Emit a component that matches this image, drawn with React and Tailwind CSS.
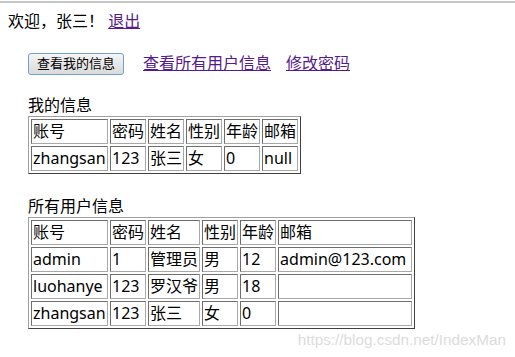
import React from "react";

const myInfo = {
  head: ["账号", "密码", "姓名", "性别", "年龄", "邮箱"],
  rows: [["zhangsan", "123", "张三", "女", "0", "null"]],
  widths: ["w-[77px]", "w-[36px]", "w-[36px]", "w-[36px]", "w-[36px]", "w-[36px]"],
};

const allUsers = {
  head: ["账号", "密码", "姓名", "性别", "年龄", "邮箱"],
  rows: [
    ["admin", "1", "管理员", "男", "12", "admin@123.com"],
    ["luohanye", "123", "罗汉爷", "男", "18", ""],
    ["zhangsan", "123", "张三", "女", "0", ""],
  ],
  widths: ["w-[77px]", "w-[36px]", "w-[52px]", "w-[36px]", "w-[36px]", "w-[134px]"],
};

function Cell({ children, width }) {
  return (
    <td
      className={`${width} h-[25px] p-px whitespace-nowrap align-middle text-left border border-t-[#6e6e6e] border-l-[#6e6e6e] border-b-[#a8a8a8] border-r-[#a8a8a8]`}
    >
      {children}
    </td>
  );
}

function InfoTable({ data }) {
  return (
    <table className="border-separate border-spacing-[2px] border border-t-[#a0a0a0] border-l-[#a0a0a0] border-b-[#404040] border-r-[#404040] table-fixed">
      <tbody>
        <tr>
          {data.head.map((h, i) => (
            <Cell key={h} width={data.widths[i]}>
              {h}
            </Cell>
          ))}
        </tr>
        {data.rows.map((row, r) => (
          <tr key={r}>
            {row.map((v, i) => (
              <Cell key={i} width={data.widths[i]}>
                {v}
              </Cell>
            ))}
          </tr>
        ))}
      </tbody>
    </table>
  );
}

export default function App() {
  return (
    <div className="relative h-[357px] w-[515px] overflow-hidden bg-white text-black text-[16px] leading-[21px] font-['Noto_Sans','Noto_Sans_CJK_SC',sans-serif]">
      <div className="mt-px h-[2px] bg-[#c6c6c6]" />
      <div className="px-2 pt-2">
        <div className="h-[21px] whitespace-nowrap">
          欢迎，张三！{" "}
          <a href="#" className="text-[#551a8b] underline">
            退出
          </a>
        </div>

        <div className="mt-[19px] ml-5 flex h-[25px] items-center whitespace-nowrap">
          <button className="h-[22px] w-[96px] rounded-[3px] border border-[#6ea1d6] bg-linear-to-b from-[#f5f5f5] to-[#dadada] text-[13px] leading-none text-black">
            查看我的信息
          </button>
          <a href="#" className="ml-[19px] text-[#551a8b] underline">
            查看所有用户信息
          </a>
          <a href="#" className="ml-[15px] text-[#551a8b] underline">
            修改密码
          </a>
        </div>

        <div className="ml-5 mt-[19px]">
          <div className="h-[21px]">我的信息</div>
          <InfoTable data={myInfo} />
        </div>

        <div className="ml-5 mt-[22px]">
          <div className="h-[21px]">所有用户信息</div>
          <InfoTable data={allUsers} />
        </div>
      </div>

      <div className="absolute right-[9px] bottom-[10px] font-['Liberation_Sans',Arial,sans-serif] text-[15.3px] leading-none text-[#dcdcdc]">
        https://blog.csdn.net/IndexMan
      </div>
    </div>
  );
}
